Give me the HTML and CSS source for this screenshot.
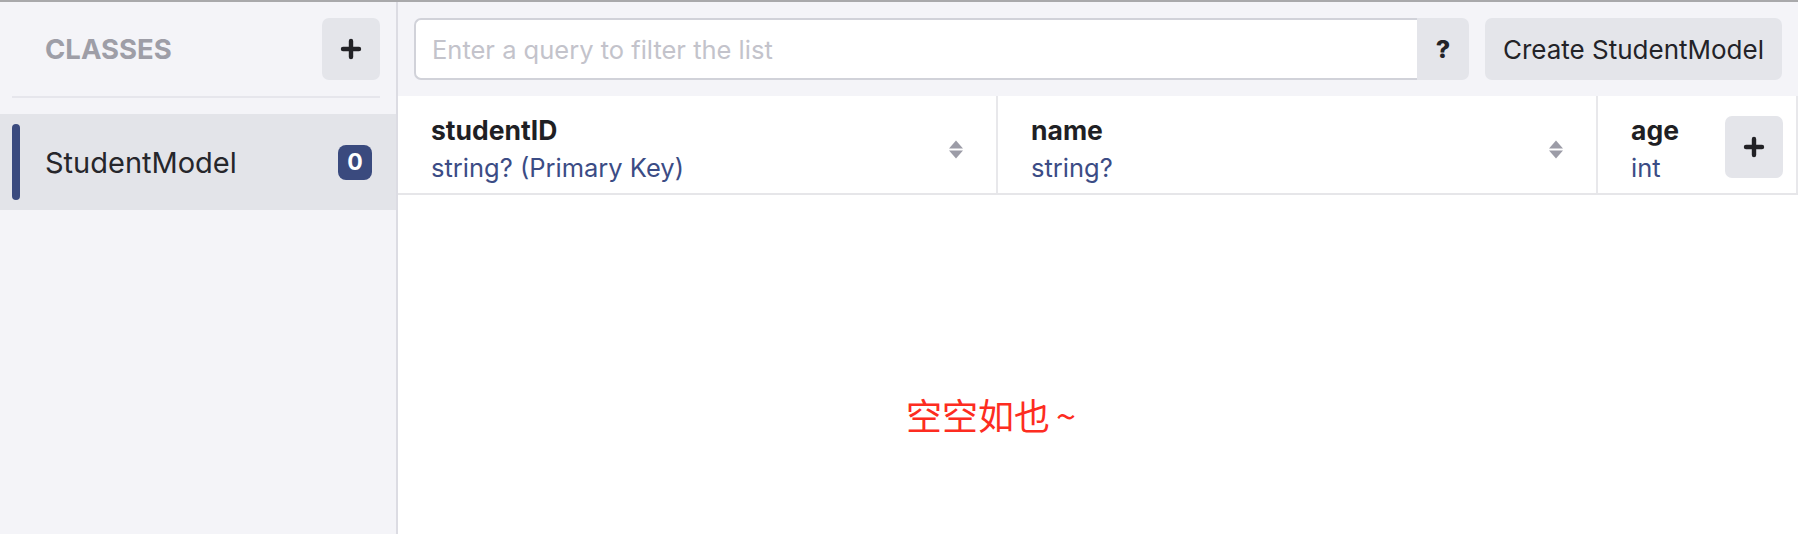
FILE: index.html
```html
<!DOCTYPE html>
<html lang="en">
<head>
  <meta charset="UTF-8">
  <meta name="viewport" content="width=device-width, initial-scale=1.0">
  <title>Realm Browser</title>
  <link rel="stylesheet" href="styles.css">
</head>
<body>
  <aside class="sidebar">
    <div class="sidebar-header">
      <span class="sidebar-title">Classes</span>
      <button class="icon-button" title="Add class">
        <svg width="22" height="22" viewBox="0 0 22 22"><path d="M11 3v16M3 11h16" stroke="#222226" stroke-width="4.4" stroke-linecap="round"/></svg>
      </button>
    </div>
    <div class="sidebar-divider"></div>
    <ul class="class-list">
      <li class="class-item selected">
        <span class="class-marker"></span>
        <span class="class-name">StudentModel</span>
        <span class="class-count">0</span>
      </li>
    </ul>
  </aside>

  <main class="main">
    <div class="toolbar">
      <div class="search">
        <input class="search-input" type="text" placeholder="Enter a query to filter the list">
        <button class="search-help">?</button>
      </div>
      <button class="create-button">Create StudentModel</button>
    </div>

    <div class="table-header">
      <div class="column wide">
        <div class="column-text">
          <div class="column-name">studentID</div>
          <div class="column-type">string? (Primary Key)</div>
        </div>
        <span class="sort-icon">
          <svg width="14" height="19" viewBox="0 0 14 19"><path d="M7 0.5L14 8.5H0Z M0 10.5H14L7 18.5Z" fill="#9c9ca7"/></svg>
        </span>
      </div>
      <div class="column wide">
        <div class="column-text">
          <div class="column-name">name</div>
          <div class="column-type">string?</div>
        </div>
        <span class="sort-icon">
          <svg width="14" height="19" viewBox="0 0 14 19"><path d="M7 0.5L14 8.5H0Z M0 10.5H14L7 18.5Z" fill="#9c9ca7"/></svg>
        </span>
      </div>
      <div class="column last">
        <div class="column-text">
          <div class="column-name">age</div>
          <div class="column-type">int</div>
        </div>
        <button class="icon-button add-column" title="Add property">
          <svg width="22" height="22" viewBox="0 0 22 22"><path d="M11 3v16M3 11h16" stroke="#222226" stroke-width="4.4" stroke-linecap="round"/></svg>
        </button>
      </div>
    </div>

    <div class="empty">空空如也<span class="tilde">~</span></div>
  </main>
</body>
</html>
```

FILE: styles.css
```css
/* General Styles */
* {
  box-sizing: border-box;
}

body {
  margin: 0;
  height: 100vh;
  display: flex;
  border-top: 2px solid #a9a9ab;
  font-family: 'Inter', 'Noto Sans', sans-serif;
  color: #232328;
  background-color: #ffffff;
  overflow: hidden;
}

button {
  font-family: inherit;
  border: none;
  cursor: pointer;
}

/* Sidebar */
.sidebar {
  width: 398px;
  flex-shrink: 0;
  background-color: #f4f4f8;
  border-right: 2px solid #dcdce3;
}

.sidebar-header {
  display: flex;
  align-items: center;
  justify-content: space-between;
  padding: 16px 16px 16px 45px;
}

.sidebar-title {
  font-size: 27.5px;
  font-weight: 700;
  text-transform: uppercase;
  color: #9e9ea7;
}

.icon-button {
  width: 58px;
  height: 62px;
  border-radius: 7px;
  background-color: #e4e5ea;
  display: flex;
  align-items: center;
  justify-content: center;
  padding: 0;
}

.sidebar-divider {
  height: 2px;
  margin: 0 16px 0 12px;
  background-color: #e6e6ec;
}

.class-list {
  list-style: none;
  margin: 16px 0 0;
  padding: 0;
}

.class-item {
  display: flex;
  align-items: center;
  height: 96px;
  padding: 10px 24px 10px 12px;
}

.class-item.selected {
  background-color: #e3e4e9;
}

.class-marker {
  width: 8px;
  align-self: stretch;
  border-radius: 4px;
  background-color: #3a4a7e;
}

.class-name {
  flex: 1;
  margin-left: 25px;
  font-size: 29px;
  color: #26262b;
}

.class-count {
  min-width: 34px;
  height: 35px;
  border-radius: 8px;
  background-color: #3a4a7e;
  color: #ffffff;
  font-size: 23px;
  font-weight: 700;
  display: flex;
  align-items: center;
  justify-content: center;
}

/* Main area */
.main {
  flex: 1;
  display: flex;
  flex-direction: column;
  min-width: 0;
}

.toolbar {
  display: flex;
  gap: 16px;
  padding: 16px;
  background-color: #f4f4f8;
}

.search {
  flex: 1;
  display: flex;
}

.search-input {
  flex: 1;
  height: 62px;
  padding: 0 16px;
  border: 2px solid #d1d2d9;
  border-right: none;
  border-radius: 7px 0 0 7px;
  font-family: inherit;
  font-size: 25.5px;
  color: #232328;
  outline: none;
}

.search-input::placeholder {
  color: #c3c3cb;
}

.search-help {
  width: 52px;
  height: 62px;
  border-radius: 0 7px 7px 0;
  background-color: #e4e5ea;
  font-size: 25px;
  font-weight: 800;
  color: #232328;
}

.create-button {
  height: 62px;
  padding: 0 18px;
  border-radius: 7px;
  background-color: #e4e5ea;
  font-size: 26px;
  color: #232328;
}

/* Table header */
.table-header {
  display: flex;
  border-bottom: 2px solid #e6e6e9;
}

.column {
  display: flex;
  align-items: center;
  padding: 15px 33px 6px 33px;
  border-right: 2px solid #e8e8eb;
}

.column.wide {
  width: 600px;
}

.column.last {
  width: 200px;
  padding-right: 13px;
}

.column-text {
  flex: 1;
  font-size: 25.5px;
  line-height: 38px;
}

.column-name {
  font-size: 26.5px;
  font-weight: 700;
  color: #1f1f24;
}

.column-type {
  color: #3b4c85;
}

.sort-icon {
  display: flex;
}

.add-column {
  margin-top: -4px;
}

/* Empty state */
.empty {
  width: 1186px;
  padding-top: 194px;
  text-align: center;
  font-family: 'Noto Sans CJK SC', 'Noto Sans', sans-serif;
  font-size: 36px;
  line-height: 50px;
  color: #fd2c21;
}

.tilde {
  margin-left: 6px;
}
```
